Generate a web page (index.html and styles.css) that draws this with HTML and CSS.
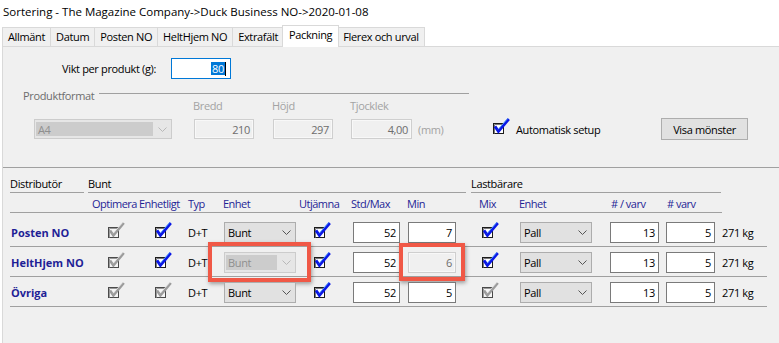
FILE: index.html
```html
<!DOCTYPE html>
<html>
  <head>
    <meta charset="UTF-8" />
    <title>Sortering</title>
    <link rel="stylesheet" href="styles.css">
  </head>
  <body>
    <!-- shared glyphs -->
    <svg class="defs" aria-hidden="true">
      <symbol id="cbOn" viewBox="0 0 18 17">
        <rect x="1.5" y="5.5" width="10" height="10" fill="#fff" stroke="#1c1c1c"></rect>
        <path d="M2.5 15.5V6.5H11.5" fill="none" stroke="#7a7a7a"></path>
        <polyline points="3,8.4 6.4,13.4 16.8,1" fill="none" stroke="#0a17e6" stroke-width="2.8"></polyline>
        <polyline points="6.1,11.4 15.8,0.4" fill="none" stroke="#58a6ff" stroke-width="0.9"></polyline>
      </symbol>
      <symbol id="cbOff" viewBox="0 0 18 17">
        <rect x="1.5" y="5.5" width="10" height="10" fill="#f6f6f6" stroke="#4a4a4a"></rect>
        <path d="M2.5 15.5V6.5H11.5" fill="none" stroke="#9a9a9a"></path>
        <polyline points="3,8.4 6.4,13.4 16.8,1" fill="none" stroke="#9c9c9c" stroke-width="2.6"></polyline>
        <polyline points="6.1,11.4 15.8,0.4" fill="none" stroke="#e8e8e8" stroke-width="0.8"></polyline>
      </symbol>
      <symbol id="chevron" viewBox="0 0 9 5">
        <path d="M0.5 0.5L4.5 4.5L8.5 0.5" fill="none" stroke="currentColor"></path>
      </symbol>
    </svg>

    <div class="titlebar">Sortering - The Magazine Company-&gt;Duck Business NO-&gt;2020-01-08</div>

    <div class="tabs">
      <div class="tab">Allmänt</div>
      <div class="tab">Datum</div>
      <div class="tab">Posten NO</div>
      <div class="tab">HeltHjem NO</div>
      <div class="tab">Extrafält</div>
      <div class="tab active">Packning</div>
      <div class="tab">Flerex och urval</div>
    </div>

    <div class="page">
      <div class="setup">
        <div class="weight-row">
          <span class="weight-label">Vikt per produkt (g):</span>
          <span class="field focused"><span class="selected">80</span><span class="caret"></span></span>
        </div>

        <div class="group-title">
          <span>Produktformat</span>
          <span class="group-line"></span>
        </div>
        <div class="dim-labels">
          <span class="dim-bredd">Bredd</span>
          <span class="dim-hojd">Höjd</span>
          <span>Tjocklek</span>
        </div>
        <div class="format-row">
          <div class="combo off format-combo">
            <span class="combo-text">A4</span>
            <span class="combo-arrow"><svg class="chev"><use href="#chevron"></use></svg></span>
          </div>
          <span class="field disabled dim-bredd-field">210</span>
          <span class="field disabled dim-hojd-field">297</span>
          <span class="field disabled dim-tjock-field">4,00</span>
          <span class="unit">(mm)</span>
          <svg class="cb"><use href="#cbOn"></use></svg>
          <span class="check-label">Automatisk setup</span>
          <button class="btn">Visa mönster</button>
        </div>
      </div>

      <div class="dist">
        <div class="group-head">
          <span class="gh gh-dist">Distributör</span>
          <span class="gh gh-bunt">Bunt</span>
          <span class="gh gh-last">Lastbärare</span>
        </div>

        <div class="col-head">
          <span></span>
          <span>Optimera</span>
          <span>Enhetligt</span>
          <span>Typ</span>
          <span>Enhet</span>
          <span>Utjämna</span>
          <span>Std/Max</span>
          <span>Min</span>
          <span>Mix</span>
          <span>Enhet</span>
          <span class="nudge">#&nbsp;/ varv</span>
          <span class="nudge"># varv</span>
        </div>

        <div class="rows">
          <div class="row">
            <span class="name">Posten NO</span>
            <span class="ck ck-opt"><svg class="cb"><use href="#cbOff"></use></svg></span>
            <span class="ck ck-enh"><svg class="cb"><use href="#cbOn"></use></svg></span>
            <span class="typ">D+T</span>
            <span class="cell"><span class="combo"><span class="combo-text">Bunt</span><span class="combo-arrow"><svg class="chev"><use href="#chevron"></use></svg></span></span></span>
            <span class="ck ck-utj"><svg class="cb"><use href="#cbOn"></use></svg></span>
            <span class="cell"><span class="field num std">52</span></span>
            <span class="cell"><span class="field num min">7</span></span>
            <span class="ck ck-mix"><svg class="cb"><use href="#cbOn"></use></svg></span>
            <span class="cell"><span class="combo"><span class="combo-text">Pall</span><span class="combo-arrow"><svg class="chev"><use href="#chevron"></use></svg></span></span></span>
            <span class="cell"><span class="field num per">13</span></span>
            <span class="cell"><span class="field num per">5</span></span>
            <span class="kg">271 kg</span>
          </div>

          <div class="row">
            <span class="name">HeltHjem NO</span>
            <span class="ck ck-opt"><svg class="cb"><use href="#cbOff"></use></svg></span>
            <span class="ck ck-enh"><svg class="cb"><use href="#cbOn"></use></svg></span>
            <span class="typ">D+T</span>
            <span class="cell"><span class="combo off"><span class="combo-text">Bunt</span><span class="combo-arrow"><svg class="chev"><use href="#chevron"></use></svg></span></span><span class="mark mark-combo"></span></span>
            <span class="ck ck-utj"><svg class="cb"><use href="#cbOn"></use></svg></span>
            <span class="cell"><span class="field num std">52</span></span>
            <span class="cell"><span class="field num min disabled">6</span><span class="mark mark-min"></span></span>
            <span class="ck ck-mix"><svg class="cb"><use href="#cbOn"></use></svg></span>
            <span class="cell"><span class="combo"><span class="combo-text">Pall</span><span class="combo-arrow"><svg class="chev"><use href="#chevron"></use></svg></span></span></span>
            <span class="cell"><span class="field num per">13</span></span>
            <span class="cell"><span class="field num per">5</span></span>
            <span class="kg">271 kg</span>
          </div>

          <div class="row">
            <span class="name">Övriga</span>
            <span class="ck ck-opt"><svg class="cb"><use href="#cbOff"></use></svg></span>
            <span class="ck ck-enh"><svg class="cb"><use href="#cbOff"></use></svg></span>
            <span class="typ">D+T</span>
            <span class="cell"><span class="combo"><span class="combo-text">Bunt</span><span class="combo-arrow"><svg class="chev"><use href="#chevron"></use></svg></span></span></span>
            <span class="ck ck-utj"><svg class="cb"><use href="#cbOn"></use></svg></span>
            <span class="cell"><span class="field num std">52</span></span>
            <span class="cell"><span class="field num min">5</span></span>
            <span class="ck ck-mix"><svg class="cb"><use href="#cbOff"></use></svg></span>
            <span class="cell"><span class="combo"><span class="combo-text">Pall</span><span class="combo-arrow"><svg class="chev"><use href="#chevron"></use></svg></span></span></span>
            <span class="cell"><span class="field num per">13</span></span>
            <span class="cell"><span class="field num per">5</span></span>
            <span class="kg">271 kg</span>
          </div>
        </div>
      </div>
    </div>
  </body>
</html>
```

FILE: styles.css
```css
:root {
  --panel-color: #f0f0f0;
  --tab-border: #d9d9d9;
  --line-color: #a0a0a0;
  --head-color: #1f1f96;
  --disabled-text: #a3a3a3;
  --cols: 82px 47px 49px 35px 76px 52px 56px 72px 40px 91px 56px 56px;
}

body {
  margin: 0;
  background-color: #ffffff;
  color: #000000;
  font-family: "Open Sans", "Liberation Sans", sans-serif;
  font-size: 11px;
  letter-spacing: -0.35px;
}

.defs {
  position: absolute;
  width: 0;
  height: 0;
  overflow: hidden;
}

.titlebar {
  height: 24px;
  line-height: 24px;
  padding-left: 3px;
  font-size: 11.5px;
  letter-spacing: 0;
}

/* Tab strip */
.tabs {
  display: flex;
  align-items: flex-end;
  height: 22px;
  padding-left: 2px;
}

.tab {
  height: 18px;
  line-height: 18px;
  padding: 0 5px;
  border: 1px solid var(--tab-border);
  border-bottom: none;
  background-color: var(--panel-color);
  margin-right: -1px;
}

.tab.active {
  position: relative;
  z-index: 1;
  height: 19px;
  padding: 0 6px 2px;
  margin: 0 -2px -1px -1px;
  background-color: #ffffff;
}

.page {
  height: 296px;
  margin-left: 2px;
  border-top: 1px solid var(--tab-border);
  border-left: 1px solid var(--tab-border);
  background-color: var(--panel-color);
}

/* Setup area */
.setup {
  padding-top: 11px;
  padding-bottom: 27px;
  border-bottom: 1px solid var(--line-color);
}

.weight-row {
  display: flex;
  align-items: center;
  height: 21px;
  padding-left: 59px;
}

.weight-label {
  width: 109px;
}

.field {
  box-sizing: border-box;
  display: flex;
  align-items: center;
  justify-content: flex-end;
  height: 21px;
  padding-right: 3px;
  border: 1px solid #7a7a7a;
  background-color: #ffffff;
}

.field.focused {
  width: 60px;
  padding-right: 4px;
  border-color: #0078d7;
}

.selected {
  line-height: 13px;
  padding: 0 1px;
  background-color: #0078d7;
  color: #ffffff;
}

.caret {
  width: 1px;
  height: 14px;
  background-color: #000000;
}

.field.disabled {
  border-color: #cfcfcf;
  box-shadow: inset 0 0 0 1px #f8f8f8;
  background-color: var(--panel-color);
  color: #6d6d6d;
}

.group-title {
  display: flex;
  width: 446px;
  margin: 12px 0 0 20px;
  line-height: 10px;
  color: #6d6d6d;
}

.group-line {
  flex: 1;
  align-self: flex-start;
  margin: 2px 0 0 5px;
  border-top: 1px solid var(--line-color);
}

.dim-labels {
  display: flex;
  padding-left: 190px;
  line-height: 10px;
  color: var(--disabled-text);
}

.dim-bredd {
  width: 79px;
}

.dim-hojd {
  width: 78px;
}

.format-row {
  display: flex;
  align-items: center;
  height: 22px;
  margin-top: 7px;
  padding-left: 31px;
}

.format-row .field {
  height: 20px;
}

.dim-bredd-field {
  width: 60px;
  margin-left: 22px;
}

.dim-hojd-field {
  width: 60px;
  margin-left: 19px;
}

.dim-tjock-field {
  width: 61px;
  margin-left: 18px;
}

.unit {
  width: 74px;
  margin-left: 6px;
  color: var(--disabled-text);
}

.format-row .cb {
  align-self: flex-start;
}

.check-label {
  width: 145px;
  margin-left: 6px;
}

.btn {
  box-sizing: border-box;
  width: 87px;
  height: 22px;
  padding: 0;
  border: 1px solid #adadad;
  background-color: #e1e1e1;
  font: inherit;
  letter-spacing: inherit;
  color: #000000;
}

/* Combo boxes */
.combo {
  box-sizing: border-box;
  display: flex;
  flex-shrink: 0;
  width: 72px;
  height: 21px;
  padding: 1px 0 1px 1px;
  border: 1px solid #adadad;
  background-color: #e1e1e1;
}

.format-row .format-combo {
  width: 138px;
  height: 20px;
}

.combo-text {
  flex: 1;
  display: flex;
  align-items: center;
  padding-left: 2px;
}

.combo-arrow {
  display: flex;
  align-items: center;
  justify-content: center;
  width: 18px;
  color: #555555;
}

.chev {
  width: 9px;
  height: 5px;
}

.combo.off {
  border-color: #cccccc;
  background-color: #e6e6e6;
  color: #8f8f8f;
}

.combo.off .combo-text {
  margin: 1px 0;
  background-color: #cccccc;
}

.combo.off .combo-arrow {
  color: #b8b8b8;
}

.cb {
  display: block;
  flex-shrink: 0;
  width: 18px;
  height: 17px;
}

/* Distributor table */
.dist {
  padding-left: 7px;
}

.group-head {
  display: flex;
}

.gh {
  padding-top: 8px;
  line-height: 16px;
  border-bottom: 1px solid var(--line-color);
}

.gh-dist {
  width: 74px;
}

.gh-bunt {
  width: 378px;
  margin-left: 4px;
}

.gh-last {
  width: 250px;
  margin-left: 5px;
}

.col-head {
  display: grid;
  grid-template-columns: var(--cols);
  width: 712px;
  padding-top: 3px;
  line-height: 16px;
  border-bottom: 1px solid var(--line-color);
  color: var(--head-color);
  letter-spacing: -0.5px;
  white-space: nowrap;
}

.col-head .nudge {
  padding-left: 1px;
}

.rows {
  margin-top: 4px;
}

.row {
  display: grid;
  grid-template-columns: var(--cols) 45px;
  width: 757px;
  height: 21px;
  padding: 5px 0 3px;
  border-bottom: 1px solid var(--line-color);
  align-items: center;
  white-space: nowrap;
}

.name {
  padding-left: 1px;
  font-weight: bold;
  letter-spacing: 0;
  color: var(--head-color);
}

.ck {
  align-self: start;
}

.ck-opt,
.ck-enh {
  padding-left: 15px;
}

.ck-utj {
  padding-left: 14px;
}

.ck-mix {
  padding-left: 2px;
}

.cell {
  position: relative;
  display: flex;
}

.cell .combo {
  margin-left: 1px;
}

.num.std {
  width: 47px;
  margin-left: 2px;
}

.num.min {
  width: 48px;
  margin-left: 1px;
}

.num.per {
  width: 49px;
}

/* Highlight frames drawn over the disabled controls */
.mark {
  position: absolute;
  box-sizing: border-box;
  border: 4px solid #f05846;
  box-shadow: 1px 2px 4px rgba(0, 0, 0, 0.35);
}

.mark-combo {
  left: -15px;
  top: -10px;
  width: 103px;
  height: 40px;
}

.mark-min {
  left: -8px;
  top: -9px;
  width: 66px;
  height: 38px;
}
```
